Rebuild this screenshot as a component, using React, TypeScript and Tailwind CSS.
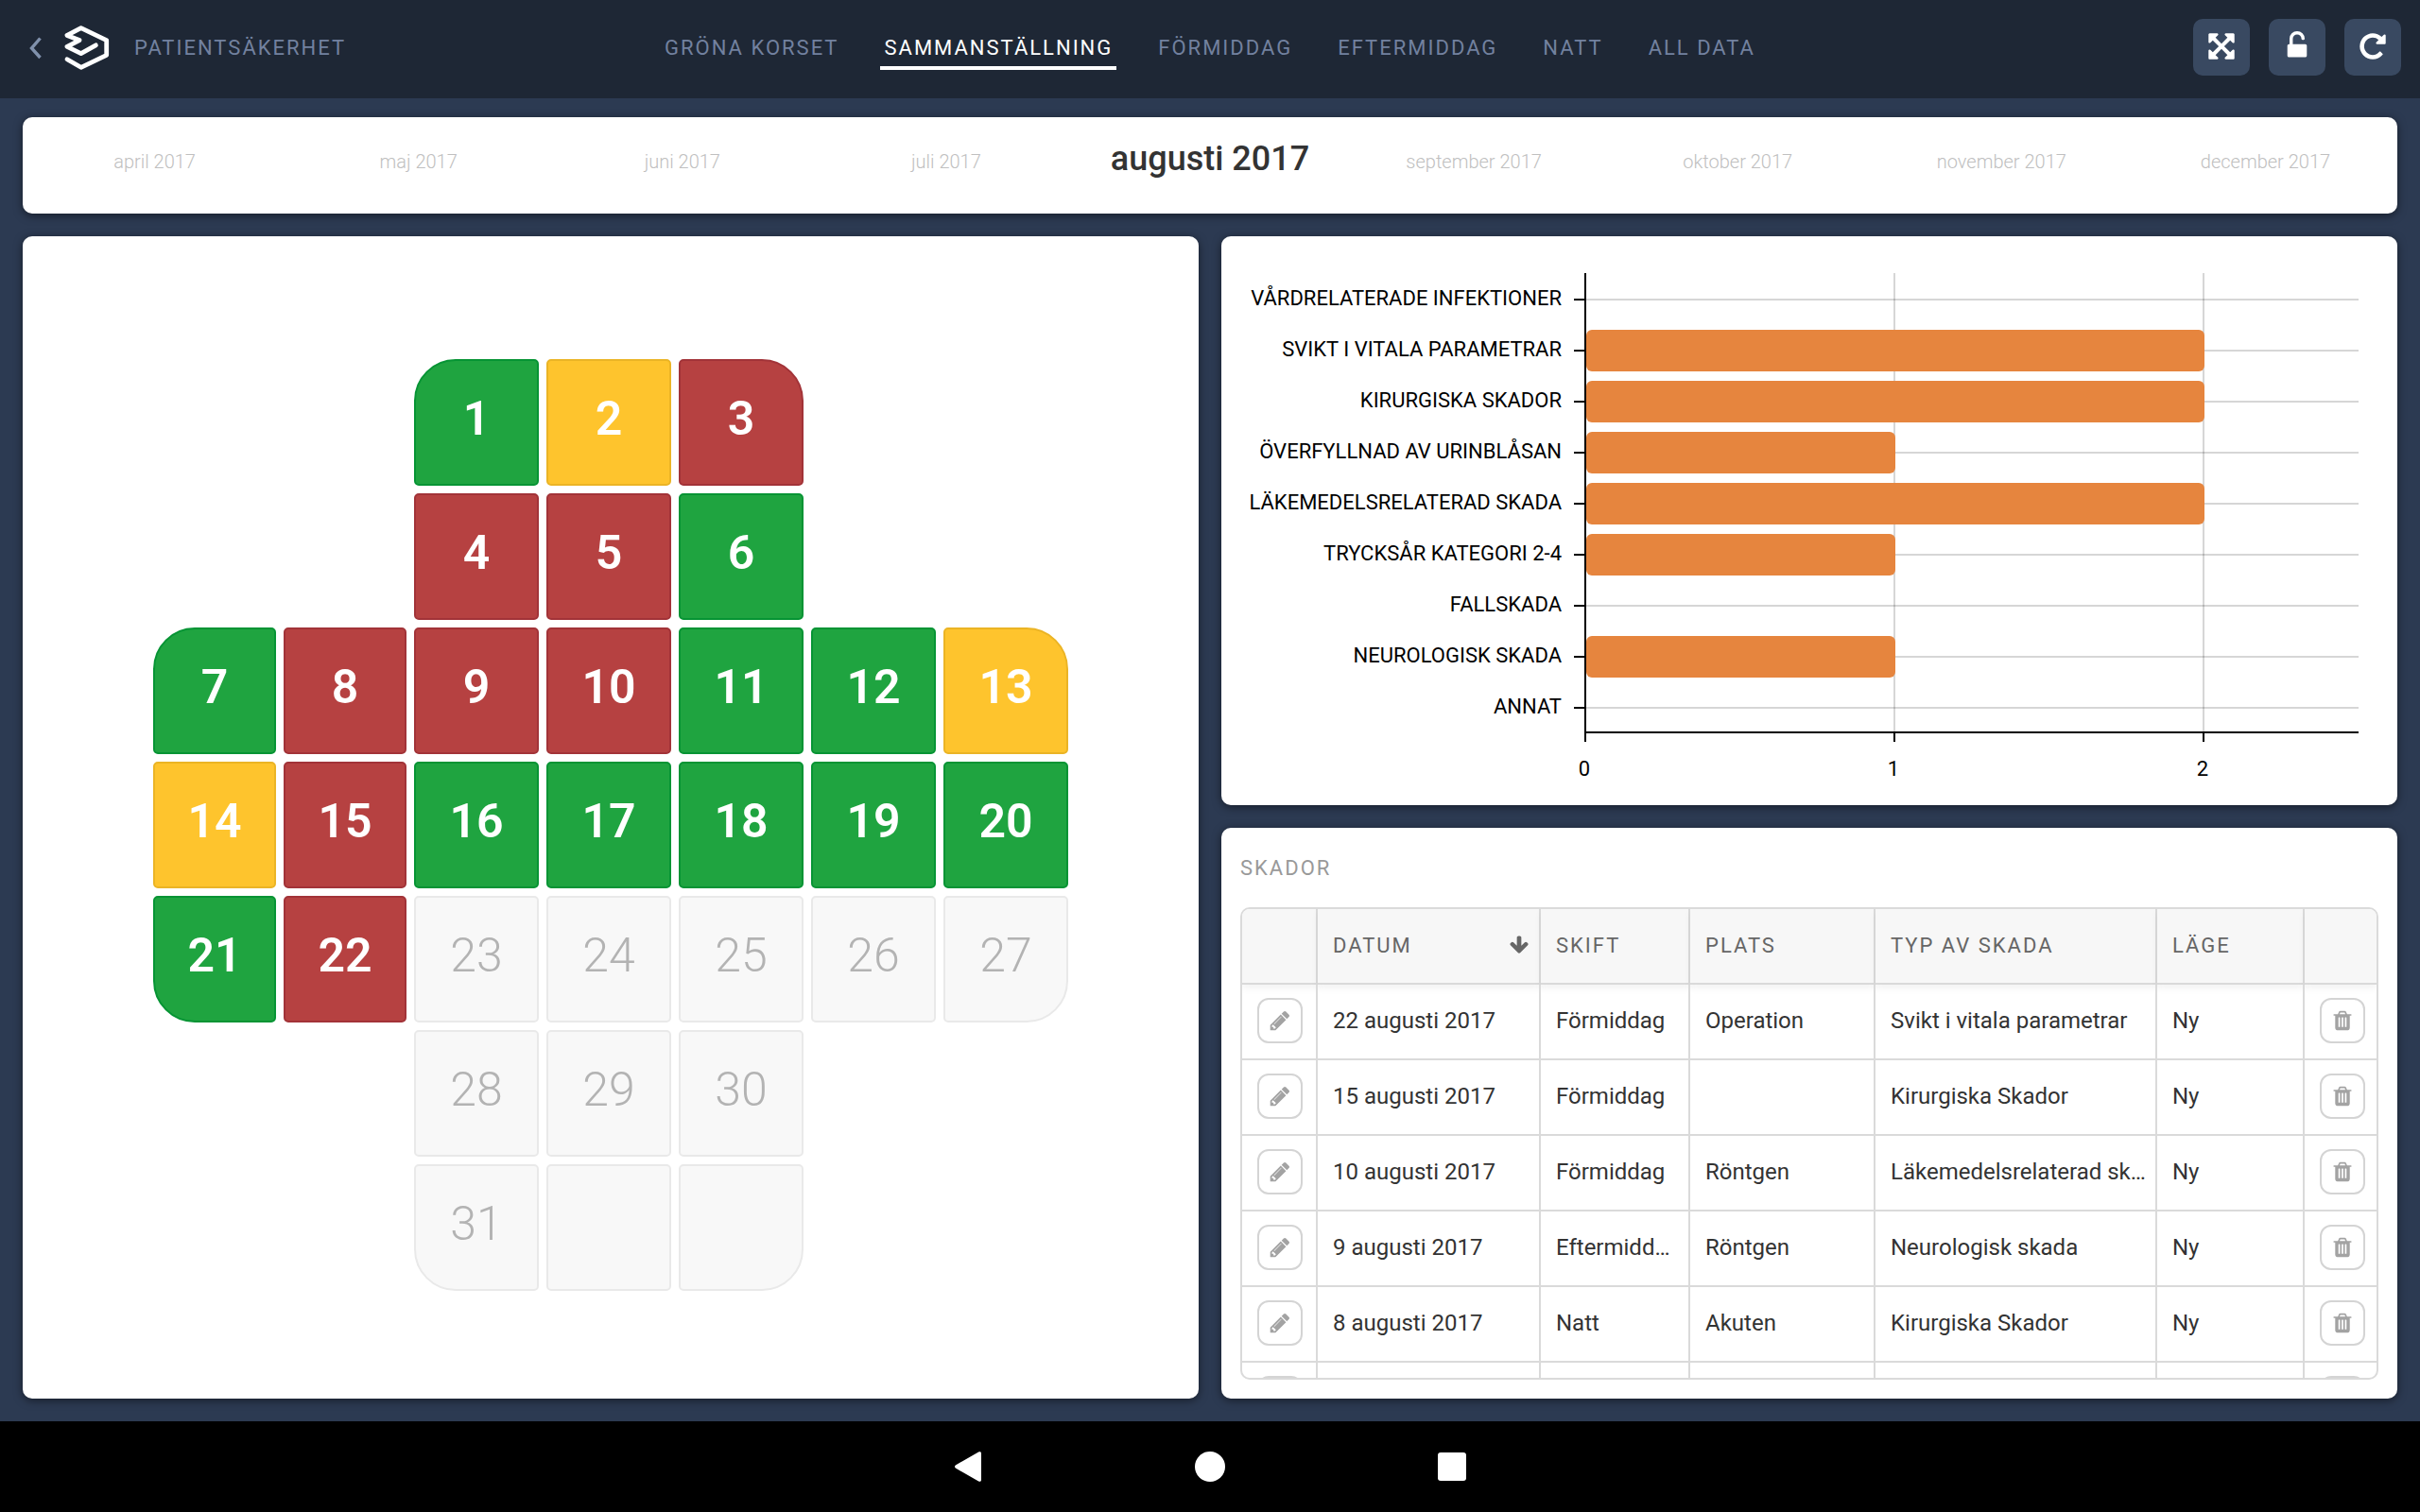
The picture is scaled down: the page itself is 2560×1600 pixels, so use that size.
import React from "react";

const ICONS = {
  expand:
    "M1411 541l-355 355 355 355 144-144q29-31 70-14 39 17 39 59v448q0 26-19 45t-45 19h-448q-42 0-59-40-17-39 14-69l144-144-355-355-355 355 144 144q31 30 14 69-17 40-59 40h-448q-26 0-45-19t-19-45v-448q0-42 40-59 39-17 69 14l144 144 355-355-355-355-144 144q-19 19-45 19-12 0-24-5-40-17-40-59v-448q0-26 19-45t45-19h448q42 0 59 40 17 39-14 69l-144 144 355 355 355-355-144-144q-31-30-14-69 17-40 59-40h448q26 0 45 19t19 45v448q0 42-39 59-13 5-25 5-26 0-45-19z",
  unlock:
    "M1376 768q40 0 68 28t28 68v576q0 40-28 68t-68 28h-960q-40 0-68-28t-28-68v-576q0-40 28-68t68-28h32v-320q0-185 131.5-316.5t316.5-131.5 316.5 131.5 131.5 316.5q0 26-19 45t-45 19h-64q-26 0-45-19t-19-45q0-106-75-181t-181-75-181 75-75 181v320h736z",
  repeat:
    "M1664 256v448q0 26-19 45t-45 19h-448q-42 0-59-40-17-39 14-69l138-138q-148-137-349-137-104 0-198.5 40.5t-163.5 109.5-109.5 163.5-40.5 198.5 40.5 198.5 109.5 163.5 163.5 109.5 198.5 40.5q119 0 225-52t179-147q7-10 23-12 15 0 25 9l137 138q9 8 9.5 20.5t-7.5 22.5q-109 132-264 204.5t-327 72.5q-156 0-298-61t-245-164-164-245-61-298 61-298 164-245 245-164 298-61q147 0 284.5 55.5t244.5 156.5l130-129q29-31 70-14 39 17 39 59z",
  pencil:
    "M491 1536l91-91-235-235-91 91v107h128v128h107zm523-928q0-22-22-22-10 0-17 7l-542 542q-7 7-7 17 0 22 22 22 10 0 17-7l542-542q7-7 7-17zm-54-192l416 416-832 832h-416v-416zm683 96q0 53-37 90l-166 166-416-416 166-165q36-38 90-38 53 0 91 38l235 234q37 39 37 91z",
  trash:
    "M704 1376v-704q0-14-9-23t-23-9h-64q-14 0-23 9t-9 23v704q0 14 9 23t23 9h64q14 0 23-9t9-23zm256 0v-704q0-14-9-23t-23-9h-64q-14 0-23 9t-9 23v704q0 14 9 23t23 9h64q14 0 23-9t9-23zm256 0v-704q0-14-9-23t-23-9h-64q-14 0-23 9t-9 23v704q0 14 9 23t23 9h64q14 0 23-9t9-23zm-544-992h448l-48-117q-7-9-17-11h-317q-10 2-17 11zm928 32v64q0 14-9 23t-23 9h-96v948q0 83-47 143.5t-113 60.5h-832q-66 0-113-58.5t-47-141.5v-952h-96q-14 0-23-9t-9-23v-64q0-14 9-23t23-9h309l70-167q15-37 54-63t79-26h320q40 0 79 26t54 63l70 167h309q14 0 23 9t9 23z",
  arrowDown:
    "M1675 832q0 53-37 90l-651 652q-39 37-91 37-53 0-90-37l-651-652q-38-36-38-90 0-53 38-91l74-75q39-37 91-37 53 0 90 37l294 294v-704q0-52 38-90t90-38h128q52 0 90 38t38 90v704l294-294q37-37 90-37 52 0 91 37l75 75q37 39 37 91z",
};

function Icon({ name, className }: { name: keyof typeof ICONS; className: string }) {
  return (
    <svg viewBox="0 0 1792 1792" className={className} fill="currentColor" aria-hidden="true">
      <path d={ICONS[name]} />
    </svg>
  );
}

const TABS = ["GRÖNA KORSET", "SAMMANSTÄLLNING", "FÖRMIDDAG", "EFTERMIDDAG", "NATT", "ALL DATA"];

const ACTIONS: { name: "expand" | "unlock" | "repeat"; label: string }[] = [
  { name: "expand", label: "Helskärm" },
  { name: "unlock", label: "Lås upp" },
  { name: "repeat", label: "Uppdatera" },
];

function Header() {
  return (
    <header className="grid h-[104px] shrink-0 grid-cols-[1fr_auto_1fr] bg-[#1e2735] px-5 pt-5 pb-6">
      <div className="flex items-center">
        <button type="button" aria-label="Tillbaka" className="flex h-15 w-9 items-center justify-center text-[#8091ac]">
          <svg viewBox="0 0 16 26" className="h-[26px] w-4" fill="none" stroke="currentColor" strokeWidth="3.4" aria-hidden="true">
            <path d="M12.5 3.500 3.500 14l9 10" />
          </svg>
        </button>
        <svg viewBox="0 0 56 56" className="ml-2 size-14" fill="none" stroke="#fff" strokeWidth="4.8" strokeLinejoin="round" strokeLinecap="round" aria-hidden="true">
          <path d="M7 40.7 21.7 49.3 48.7 36.3V20.7L21.7 7.7 7 15.4 20 20.6 7 27.3 21.7 34.6 37.4 25.8" />
        </svg>
        <span className="ml-[22px] pt-[2px] text-[22px] leading-[38px] tracking-[2px] text-[#72819f]">PATIENTSÄKERHET</span>
      </div>
      <nav className="flex items-center gap-10">
        {TABS.map((t) => (
          <a
            key={t}
            href="#"
            className={
              "border-b-4 px-1 pt-[6px] text-[22px] leading-[38px] tracking-[2px] " +
              (t === "SAMMANSTÄLLNING" ? "border-white text-white" : "border-transparent text-[#72819f]")
            }
          >
            {t}
          </a>
        ))}
      </nav>
      <div className="flex items-center justify-end gap-5">
        {ACTIONS.map((a) => (
          <button key={a.name} type="button" aria-label={a.label} className="flex size-15 items-center justify-center rounded-[10px] bg-[#394961] pb-[3px] text-white">
            <Icon name={a.name} className="size-8" />
          </button>
        ))}
      </div>
    </header>
  );
}

const MONTHS = ["april", "maj", "juni", "juli", "augusti", "september", "oktober", "november", "december"];

function Timeline() {
  return (
    <section className="grid h-[102px] shrink-0 grid-cols-9 rounded-[10px] bg-white pt-[23px] text-center shadow-[0_2px_10px_rgba(0,0,0,0.5)]">
      {MONTHS.map((m) => (
        <button
          key={m}
          type="button"
          className={
            "self-start whitespace-nowrap " +
            (m === "augusti" ? "text-[36px] leading-[42px] font-medium text-[#333]" : "text-[20px] leading-12 font-light text-[#c0c0c0]")
          }
        >
          {m} 2017
        </button>
      ))}
    </section>
  );
}

type Tone = "g" | "y" | "r" | "n";

const TONES: Record<Tone, string> = {
  g: "bg-[#1fa440] border-[#069434] text-white font-semibold",
  y: "bg-[#fec42d] border-[#ebb425] text-white font-semibold",
  r: "bg-[#b64141] border-[#a23338] text-white font-semibold",
  n: "bg-[#f8f8f8] border-[#e9e9e9] text-[#b3b3b3] font-light",
};

const STATUS = "gyrrrggrrrggyyrggggggr";

const CORNERS: Record<number, string> = {
  1: "rounded-tl-[44px]",
  3: "rounded-tr-[44px]",
  7: "rounded-tl-[44px]",
  13: "rounded-tr-[44px]",
  21: "rounded-bl-[44px]",
  27: "rounded-br-[44px]",
  31: "rounded-bl-[44px]",
  33: "rounded-br-[44px]",
};

/* The narrow rows hold three days and start in the third column. */
const STARTS: Record<number, string> = {
  1: "col-start-3",
  4: "col-start-3",
  7: "col-start-1",
  28: "col-start-3",
  31: "col-start-3",
};

function SafetyCross() {
  return (
    <section className="flex flex-col items-center justify-center rounded-[10px] bg-white pt-4 shadow-[0_2px_10px_rgba(0,0,0,0.5)]">
      <div className="grid w-full max-w-[968px] grid-cols-[65fr_65fr_66fr_66fr_66fr_66fr_66fr] gap-2">
        {Array.from({ length: 33 }, (_, i) => i + 1).map((d) => {
          const tone = (STATUS[d - 1] ?? "n") as Tone;
          return (
            <button
              key={d}
              type="button"
              aria-label={d > 31 ? "Tom dag" : undefined}
              className={
                "h-[134px] rounded-[5px] border-2 pb-2 text-[50px] leading-15 " +
                TONES[tone] +
                " " +
                (CORNERS[d] ?? "") +
                " " +
                (STARTS[d] ?? "")
              }
            >
              {d <= 31 ? d : ""}
            </button>
          );
        })}
      </div>
    </section>
  );
}

const BARS: [string, number][] = [
  ["VÅRDRELATERADE INFEKTIONER", 0],
  ["SVIKT I VITALA PARAMETRAR", 2],
  ["KIRURGISKA SKADOR", 2],
  ["ÖVERFYLLNAD AV URINBLÅSAN", 1],
  ["LÄKEMEDELSRELATERAD SKADA", 2],
  ["TRYCKSÅR KATEGORI 2-4", 1],
  ["FALLSKADA", 0],
  ["NEUROLOGISK SKADA", 1],
  ["ANNAT", 0],
];

const X0 = 385;
const UNIT = 327;

function InjuryChart() {
  return (
    <section className="min-h-0 rounded-[10px] bg-white shadow-[0_2px_10px_rgba(0,0,0,0.5)]">
      <svg viewBox="0 0 1244 602" className="h-full w-full text-[22px]" role="img" aria-label="Skador per typ">
        {BARS.map(([label], i) => (
          <line key={label} x1={X0} x2={1203} y1={67 + i * 54} y2={67 + i * 54} stroke="#000" strokeOpacity="0.16" strokeWidth="2" />
        ))}
        {[1, 2].map((n) => (
          <line key={n} x1={X0 + n * UNIT} x2={X0 + n * UNIT} y1={39} y2={525} stroke="#000" strokeOpacity="0.16" strokeWidth="2" />
        ))}
        {BARS.map(([label, n], i) => (
          <g key={label}>
            <line x1={373} x2={X0} y1={67 + i * 54} y2={67 + i * 54} stroke="#000" strokeWidth="2" />
            <text x={360} y={73 + i * 54} textAnchor="end" fill="#000">
              {label}
            </text>
            {n > 0 && <rect x={X0 + 1} y={45 + i * 54} width={n * UNIT} height={44} rx={6} fill="#e6853e" />}
          </g>
        ))}
        <path d="M385 39V535M384 525H1203M712 525V535M1039 525V535" fill="none" stroke="#000" strokeWidth="2" />
        {[0, 1, 2].map((n) => (
          <text key={n} x={X0 - 1 + n * UNIT} y={571} textAnchor="middle" fill="#000">
            {n}
          </text>
        ))}
      </svg>
    </section>
  );
}

const ROWS = [
  ["22 augusti 2017", "Förmiddag", "Operation", "Svikt i vitala parametrar", "Ny"],
  ["15 augusti 2017", "Förmiddag", "", "Kirurgiska Skador", "Ny"],
  ["10 augusti 2017", "Förmiddag", "Röntgen", "Läkemedelsrelaterad skada", "Ny"],
  ["9 augusti 2017", "Eftermiddag", "Röntgen", "Neurologisk skada", "Ny"],
  ["8 augusti 2017", "Natt", "Akuten", "Kirurgiska Skador", "Ny"],
  ["", "", "", "", ""],
];

const TH = "h-20 border-r-2 border-b-2 border-[#dadada] bg-[#f7f7f7] pb-[2px] pl-4 text-left text-[22px] font-normal tracking-[2px] text-[#666] shadow-[0_4px_8px_rgba(0,0,0,0.05)] last:border-r-0";
const TD = "h-20 truncate border-r-2 border-b-2 border-[#dadada] pr-[10px] pb-[2px] pl-4 text-[24px] text-[#333] last:border-r-0";

function RowButton({ name, label }: { name: "pencil" | "trash"; label: string }) {
  return (
    <button type="button" aria-label={label} className="flex size-12 items-center justify-center rounded-xl border-2 border-[#d4d4d4] text-[#a3a3a3]">
      <Icon name={name} className="size-6" />
    </button>
  );
}

function InjuryTable() {
  return (
    <section className="flex min-h-0 flex-col rounded-[10px] bg-white p-5 shadow-[0_2px_10px_rgba(0,0,0,0.5)]">
      <h2 className="mb-[19px] text-[22px] leading-[45px] tracking-[2px] text-[#999]">SKADOR</h2>
      <div className="min-h-0 flex-1 overflow-hidden rounded-[10px] border-2 border-[#dadada]">
        <table className="w-full table-fixed border-separate border-spacing-0">
          <colgroup>
            <col className="w-[80px]" />
            <col className="w-[236px]" />
            <col className="w-[158px]" />
            <col className="w-[196px]" />
            <col className="w-[298px]" />
            <col className="w-[156px]" />
            <col className="w-[76px]" />
          </colgroup>
          <thead>
            <tr>
              <th className={TH} aria-label="Redigera" />
              <th className={TH} aria-sort="descending">
                <span className="flex items-center justify-between pr-[10px]">
                  DATUM
                  <Icon name="arrowDown" className="size-[22px]" />
                </span>
              </th>
              <th className={TH}>SKIFT</th>
              <th className={TH}>PLATS</th>
              <th className={TH}>TYP AV SKADA</th>
              <th className={TH}>LÄGE</th>
              <th className={TH} aria-label="Ta bort" />
            </tr>
          </thead>
          <tbody>
            {ROWS.map((r, i) => (
              <tr key={i}>
                <td className="h-20 border-r-2 border-b-2 border-[#dadada] pb-[2px] pl-4">
                  <RowButton name="pencil" label="Redigera" />
                </td>
                {r.map((c, j) => (
                  <td key={j} className={TD}>
                    {c}
                  </td>
                ))}
                <td className="h-20 border-b-2 border-[#dadada] pb-[2px] pl-4">
                  <RowButton name="trash" label="Ta bort" />
                </td>
              </tr>
            ))}
          </tbody>
        </table>
      </div>
    </section>
  );
}

function SystemBar() {
  return (
    <footer className="flex h-24 shrink-0 items-center justify-center gap-56 bg-black">
      <button type="button" aria-label="Bakåt" className="size-8">
        <svg viewBox="0 0 32 32" className="size-8" fill="#fff" aria-hidden="true">
          <path d="M3.2 14.2 27.2.6C28.7-.3 30 .3 30 2v28c0 1.700-1.300 2.300-2.800 1.400L3.200 17.800c-1.600-.9-1.600-2.700 0-3.600z" />
        </svg>
      </button>
      <button type="button" aria-label="Hem" className="size-8 rounded-full bg-white" />
      <button type="button" aria-label="Översikt" className="flex size-8 items-center justify-center">
        <span className="size-[30px] rounded-[3px] bg-white" />
      </button>
    </footer>
  );
}

export default function App() {
  return (
    <div className="flex h-screen flex-col bg-[#2c3a52] font-['Roboto',sans-serif]">
      <Header />
      <main className="flex min-h-0 flex-1 flex-col gap-6 px-6 pt-5 pb-6">
        <Timeline />
        <div className="grid min-h-0 flex-1 grid-cols-2 gap-6">
          <SafetyCross />
          <div className="grid min-h-0 grid-rows-[301fr_302fr] gap-6">
            <InjuryChart />
            <InjuryTable />
          </div>
        </div>
      </main>
      <SystemBar />
    </div>
  );
}
